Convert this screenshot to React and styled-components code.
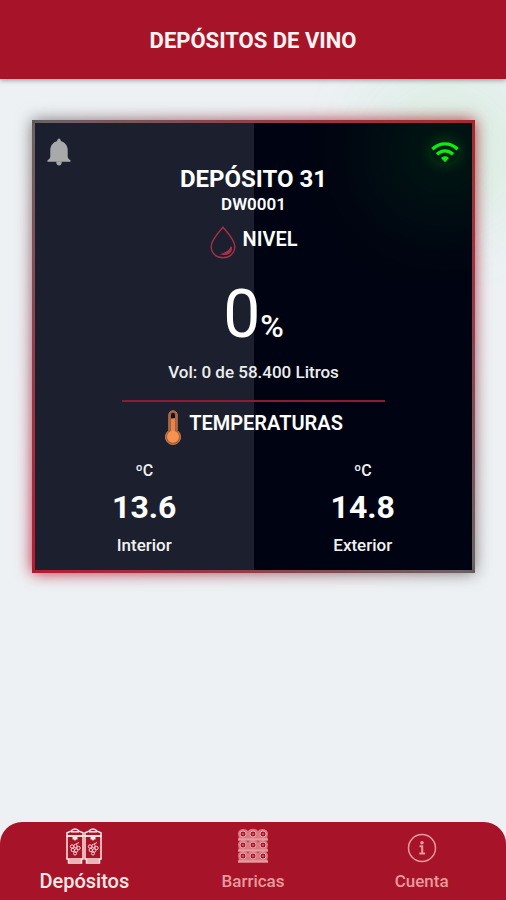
import styled, { createGlobalStyle } from "styled-components";

const tanks = [
  {
    name: "DEPÓSITO 31",
    code: "DW0001",
    level: 0,
    volume: "Vol: 0 de 58.400 Litros",
    temps: [
      { label: "Interior", value: "13.6" },
      { label: "Exterior", value: "14.8" },
    ],
  },
];

function BellIcon() {
  return (
    <svg width="24" height="28" viewBox="0 0 24 28" fill="#a7a9ab" aria-hidden="true">
      <path d="M12 .5c1 0 1.600 1.300 2.100 2.700C18.300 4.500 20.600 7.600 20.700 12v6.200c0 1.700 1 2.900 2.800 4.100v1.500H.5v-1.500c1.800-1.200 2.800-2.400 2.800-4.100V12c.1-4.400 2.400-7.500 6.600-8.800C10.400 1.800 11 .5 12 .5z" />
      <path d="M9.200 23.500h5.600c0 2.500-1.100 3.900-2.800 3.900s-2.800-1.400-2.800-3.900z" />
    </svg>
  );
}

function WifiIcon() {
  return (
    <svg width="28" height="22" viewBox="0 0 28 22" fill="none" stroke="#08ee10" strokeWidth="3.400" aria-hidden="true">
      <path d="M1.400 8.300C8.600 1 19.400 1 26.600 8.300" />
      <path d="M6 13.200c4.700-4.500 11.300-4.500 16 0" />
      <path d="M10 17c2.400-2.200 5.600-2.200 8 0L14 21.200z" fill="#08ee10" stroke="none" />
    </svg>
  );
}

function DropIcon() {
  return (
    <svg width="26" height="33" viewBox="0 0 26 33" fill="none" stroke="#a92f49" strokeWidth="1.400" aria-hidden="true">
      <path d="M13 1.200C9.500 5.500 1.200 13.800 1.200 20.600 1.200 27.300 6.400 31.800 13 31.800s11.800-4.500 11.800-11.200C24.800 13.800 16.500 5.500 13 1.200z" />
      <path d="M21.300 20.800c-1 3.600-4.600 5.900-9 7.300 5.200 1.100 9.800-2 9-7.300z" fill="#c43a55" />
    </svg>
  );
}

function ThermometerIcon() {
  return (
    <svg width="18" height="36" viewBox="0 0 18 36" aria-hidden="true">
      <path
        d="M4.800 5a4.200 4.200 0 0 1 8.400 0v15.600a7.600 7.600 0 1 1-8.400 0z"
        fill="#a4603c"
        stroke="#c4784a"
      />
      <path d="M7 4.800a2 2 0 0 1 4 0V8l-4 1z" fill="#10131f" />
      <path d="M9 8.500V26" stroke="#e5854a" strokeWidth="4" />
      <circle cx="9" cy="26.800" r="6" fill="#f5924f" />
    </svg>
  );
}

function TanksIcon() {
  return (
    <svg width="36" height="36" viewBox="0 0 36 36" fill="none" stroke="currentColor" strokeWidth="1.500" aria-hidden="true">
      {[0, 18].map((x) => (
        <g key={x} transform={`translate(${x} 0)`}>
          <path d="M1 8V4.800l4-1.600C6 1.500 7.500 1 9 1s3 .5 4 2.200l4 1.600V8z" />
          <path d="M5 3.800h8" />
          <path d="M1 8h16v23H1z" />
          <path d="M2.500 31v4h13v-4M2.500 33h13" />
          <path d="M6.500 9h5v2.500H10L9 13l-1-1.500H6.500z" fill="currentColor" stroke="none" />
          <g strokeWidth="1" opacity="0.9">
            <circle cx="6" cy="18.500" r="1.700" />
            <circle cx="9.500" cy="18" r="1.700" />
            <circle cx="12.500" cy="20" r="1.700" />
            <circle cx="6.800" cy="22" r="1.700" />
            <circle cx="10.200" cy="22.500" r="1.700" />
            <circle cx="9" cy="25.500" r="1.500" />
            <path d="M10 16l3-1.500" />
          </g>
        </g>
      ))}
    </svg>
  );
}

function BarrelsIcon() {
  return (
    <svg width="32" height="36" viewBox="0 0 32 36" fill="none" stroke="currentColor" aria-hidden="true">
      {[6, 17, 28].map((y) => (
        <g key={y}>
          <path
            d={`M1 ${y}C1 ${y - 6} 9 ${y - 6} 11 ${y - 3}C13 ${y - 6} 19 ${y - 6} 21 ${y - 3}C23 ${y - 6} 31 ${y - 6} 31 ${y}L30 ${y + 5}H2z`}
            fill="currentColor"
            stroke="none"
            opacity="0.75"
          />
          {[6, 16, 26].map((x) => (
            <g key={x}>
              <circle cx={x} cy={y} r="3" fill="#a71429" stroke="#f0acae" strokeWidth="1" />
              <path d={`M${x - 1} ${y}h2`} />
            </g>
          ))}
          <path d={`M1 ${y + 5.5}h30`} strokeWidth="2.400" />
        </g>
      ))}
    </svg>
  );
}

function InfoIcon() {
  return (
    <svg width="30" height="36" viewBox="0 0 30 36" fill="none" stroke="currentColor" aria-hidden="true">
      <circle cx="15" cy="20" r="13.500" strokeWidth="1.500" />
      <circle cx="15" cy="14.800" r="1.800" fill="currentColor" stroke="none" />
      <path d="M12.500 18.300H15.200V25.500M12.300 25.600h5.800" strokeWidth="2" />
    </svg>
  );
}

const sections = [
  { label: "Depósitos", Icon: TanksIcon, active: true },
  { label: "Barricas", Icon: BarrelsIcon },
  { label: "Cuenta", Icon: InfoIcon },
];

function TankCard({ tank }) {
  return (
    <Card>
      <Panel>
        <AlertButton type="button" aria-label="Alertas">
          <BellIcon />
        </AlertButton>
        <Signal>
          <WifiIcon />
        </Signal>
        <TankName>{tank.name}</TankName>
        <TankCode>{tank.code}</TankCode>
        <SectionTitle>
          <DropIcon />
          NIVEL
        </SectionTitle>
        <Level>
          {tank.level}
          <Percent>%</Percent>
        </Level>
        <Volume>{tank.volume}</Volume>
        <Divider />
        <SectionTitle>
          <ThermometerIcon />
          TEMPERATURAS
        </SectionTitle>
        <Temps>
          {tank.temps.map((temp) => (
            <Temp key={temp.label}>
              <TempUnit>ºC</TempUnit>
              <TempValue>{temp.value}</TempValue>
              <TempLabel>{temp.label}</TempLabel>
            </Temp>
          ))}
        </Temps>
      </Panel>
    </Card>
  );
}

function App() {
  return (
    <Page>
      <GlobalStyle />
      <Header>
        <HeaderTitle>DEPÓSITOS DE VINO</HeaderTitle>
      </Header>
      <Main>
        {tanks.map((tank) => (
          <TankCard key={tank.code} tank={tank} />
        ))}
      </Main>
      <TabBar>
        {sections.map(({ label, Icon, active }) => (
          <Tab key={label} href="#" $active={active}>
            <Icon />
            {label}
          </Tab>
        ))}
      </TabBar>
    </Page>
  );
}

export default App;

const GlobalStyle = createGlobalStyle`
  * {
    box-sizing: border-box;
  }
  body {
    margin: 0;
    background: #edf1f4;
    font-family: Roboto, sans-serif;
  }
`;
const Page = styled.div`
  display: flex;
  flex-direction: column;
  min-height: 100vh;
  overflow: hidden;
`;
const Header = styled.header`
  position: relative;
  z-index: 1;
  display: flex;
  justify-content: center;
  padding: 27px 16px 24px;
  background: #a71429;
  box-shadow: 0 1px 5px rgba(0, 0, 0, 0.4);
`;
const HeaderTitle = styled.h1`
  margin: 0;
  font-size: 22px;
  line-height: 28px;
  font-weight: 700;
  color: #fff4f2;
`;
const Main = styled.main`
  flex: 1;
  padding: 41px 31px 41px 32px;
`;
const Card = styled.article`
  position: relative;
  z-index: 0;
  padding: 3px;
  background: linear-gradient(to bottom right, #55504f, #a91728, #55504f);

  &::before {
    content: "";
    position: absolute;
    inset: 0;
    z-index: -1;
    background: linear-gradient(to bottom right, #777, #c0203a, #777);
    filter: blur(8px);
  }
`;
const Panel = styled.div`
  position: relative;
  display: flex;
  flex-direction: column;
  align-items: center;
  padding: 41px 0 15px;
  background: linear-gradient(to right, #1c202e 50%, #000412 50%);
  color: #fff;
`;
const AlertButton = styled.button`
  position: absolute;
  top: 15px;
  left: 12px;
  display: flex;
  padding: 0;
  border: none;
  background: none;
`;
const Signal = styled.div`
  position: absolute;
  top: 18px;
  right: 13px;
  display: flex;
  border-radius: 50%;
  background: rgba(0, 110, 20, 0.25);
  box-shadow: 0 0 14px rgba(0, 130, 20, 0.5), 0 0 90px 50px rgba(0, 200, 30, 0.13);
`;
const TankName = styled.h2`
  margin: 0;
  font-size: 24px;
  line-height: 30px;
  font-weight: 700;
`;
const TankCode = styled.div`
  font-size: 17px;
  line-height: 20px;
  font-weight: 600;
`;
const SectionTitle = styled.h3`
  display: flex;
  align-items: flex-start;
  gap: 7px;
  margin: 0;
  font-size: 20px;
  line-height: 26px;
  font-weight: 600;

  ${TankCode} + & {
    margin-top: 12px;
  }
`;
const Level = styled.div`
  display: flex;
  align-items: baseline;
  margin-top: 18px;
  font-size: 66px;
  line-height: 76px;
`;
const Percent = styled.span`
  font-size: 32px;
  line-height: 36px;
  font-weight: 500;
`;
const Volume = styled.div`
  margin-top: 9px;
  font-size: 17px;
  line-height: 20px;
  font-weight: 500;
  color: #eee;
`;
const Divider = styled.hr`
  width: 60%;
  height: 2px;
  margin: 18px 0 8px;
  border: none;
  background: #8d1c30;
`;
const Temps = styled.div`
  display: flex;
  align-self: stretch;
  margin-top: 15px;
`;
const Temp = styled.div`
  flex: 1;
  display: flex;
  flex-direction: column;
  align-items: center;
`;
const TempUnit = styled.div`
  font-size: 16px;
  line-height: 20px;
  font-weight: 500;
  color: #f2f2f2;
`;
const TempValue = styled.div`
  margin: 8px 0 10px;
  font-size: 32px;
  line-height: 36px;
  font-weight: 700;
`;
const TempLabel = styled.div`
  font-size: 17px;
  line-height: 20px;
  font-weight: 500;
  color: #f2f2f2;
`;
const TabBar = styled.nav`
  display: flex;
  padding: 6px 0 7px;
  border-radius: 22px 22px 0 0;
  background: #a71429;
`;
const Tab = styled.a`
  flex: 1;
  display: flex;
  flex-direction: column;
  align-items: center;
  gap: 5px;
  font-size: ${(props) => (props.$active ? "20px" : "17px")};
  line-height: 24px;
  font-weight: 500;
  text-decoration: none;
  color: ${(props) => (props.$active ? "#ffe9e6" : "#e89a9e")};
`;
